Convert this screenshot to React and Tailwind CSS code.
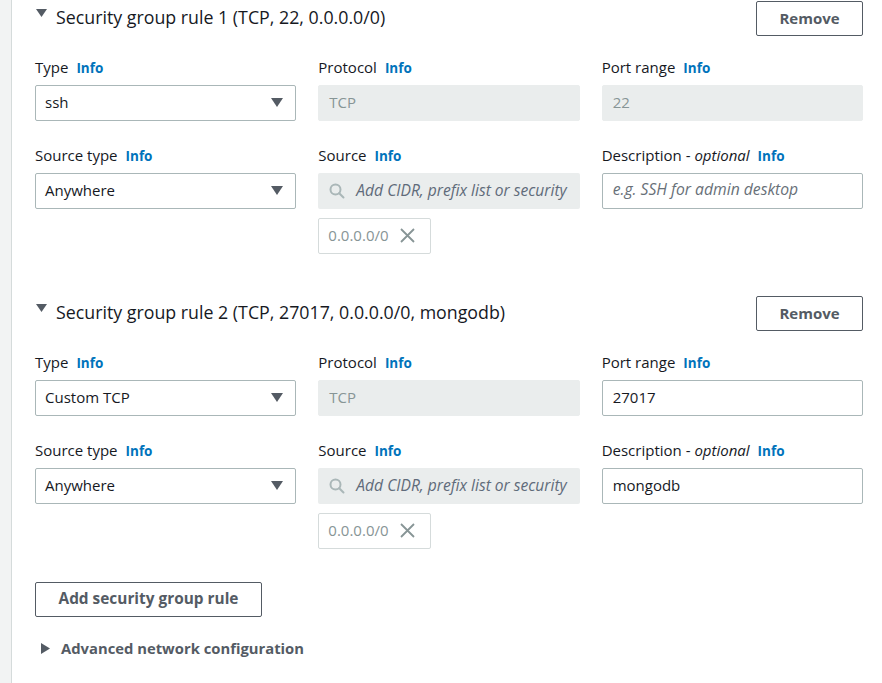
import { useState } from "react";

function Info() {
  return <span className="text-[13.5px] font-bold text-[#0073bb]">Info</span>;
}

function Label({ children }) {
  return (
    <div className="flex h-[20px] items-baseline gap-[8px] text-[15px] leading-[18px] text-[#16191f]">
      {children}
      <Info />
    </div>
  );
}

function Caret() {
  return (
    <svg width="12" height="9" viewBox="0 0 12 9" className="shrink-0">
      <path d="M0 0 H12 L6 9 Z" fill="#545b64" />
    </svg>
  );
}

function Select({ value }) {
  return (
    <div className="mt-[7px] flex h-[36px] items-center justify-between rounded-[2px] border border-[#aab7b8] bg-white pb-[2px] pl-[9px] pr-[12px] text-[15px] text-[#16191f]">
      <span>{value}</span>
      <Caret />
    </div>
  );
}

function Disabled({ value }) {
  return (
    <div className="mt-[7px] flex h-[36px] items-center rounded-[2px] border border-[#eaeded] bg-[#eaeded] px-[10px] pb-[2px] text-[15px] text-[#879596]">
      {value}
    </div>
  );
}

function TextInput({ value, placeholder }) {
  return (
    <div className="mt-[7px] flex h-[36px] items-center rounded-[2px] border border-[#aab7b8] bg-white px-[10px] pb-[2px] text-[15px]">
      {value ? (
        <span className="text-[#16191f]">{value}</span>
      ) : (
        <span className="text-[15.7px] italic text-[#687078]">{placeholder}</span>
      )}
    </div>
  );
}

function SourceField() {
  return (
    <div>
      <div className="mt-[7px] flex h-[36px] items-center gap-[11px] overflow-hidden whitespace-nowrap rounded-[2px] bg-[#eaeded] pb-[1px] pl-[11px] pr-[8px] text-[15.6px]">
        <svg width="16" height="16" viewBox="0 0 16 16" className="shrink-0">
          <circle cx="6.5" cy="6.5" r="5" fill="none" stroke="#aab7b8" strokeWidth="2" />
          <path d="M10.2 10.2 L14.5 14.5" stroke="#aab7b8" strokeWidth="2" strokeLinecap="round" />
        </svg>
        <span className="italic text-[#5f6b7a]">Add CIDR, prefix list or security</span>
      </div>
      <div className="mt-[9px] flex h-[36px] w-[113px] items-center gap-[11px] rounded-[2px] border border-[#d5dbdb] bg-white pb-[1px] pl-[9px] text-[15px] text-[#879596]">
        <span>0.0.0.0/0</span>
        <svg width="15" height="15" viewBox="0 0 15 15">
          <path d="M1 1 L14 14 M14 1 L1 14" stroke="#879596" strokeWidth="1.8" />
        </svg>
      </div>
    </div>
  );
}

function RuleHeader({ title }) {
  return (
    <div className="flex h-[35px] items-center justify-between">
      <div className="flex items-start gap-[9px] pl-[1px]">
        <svg width="11" height="8" viewBox="0 0 11 8" className="mt-[1px] shrink-0">
          <path d="M0 0 H11 L5.5 8 Z" fill="#545b64" />
        </svg>
        <span className="-mt-[3px] text-[17.8px] leading-[24px] text-[#16191f]">{title}</span>
      </div>
      <button className="h-[35px] w-[107px] rounded-[2px] border border-[#545b64] bg-white text-[15px] font-bold text-[#545b64]">
        Remove
      </button>
    </div>
  );
}

function Rule({ rule }) {
  return (
    <div>
      <RuleHeader title={rule.title} />
      <div className="mt-[22px] grid grid-cols-3 gap-x-[22px]">
        <div>
          <Label>Type</Label>
          <Select value={rule.type} />
        </div>
        <div>
          <Label>Protocol</Label>
          <Disabled value="TCP" />
        </div>
        <div>
          <Label>Port range</Label>
          {rule.portEditable ? <TextInput value={rule.port} /> : <Disabled value={rule.port} />}
        </div>
      </div>
      <div className="mt-[25px] grid grid-cols-3 gap-x-[22px]">
        <div>
          <Label>Source type</Label>
          <Select value="Anywhere" />
        </div>
        <div>
          <Label>Source</Label>
          <SourceField />
        </div>
        <div>
          <Label>
            <span>
              Description - <span className="italic">optional</span>
            </span>
          </Label>
          <TextInput value={rule.description} placeholder="e.g. SSH for admin desktop" />
        </div>
      </div>
    </div>
  );
}

export default function App() {
  const [rules] = useState([
    { title: "Security group rule 1 (TCP, 22, 0.0.0.0/0)", type: "ssh", port: "22", portEditable: false, description: "" },
    { title: "Security group rule 2 (TCP, 27017, 0.0.0.0/0, mongodb)", type: "Custom TCP", port: "27017", portEditable: true, description: "mongodb" },
  ]);

  return (
    <div className="flex min-h-screen bg-white font-['Open_Sans',sans-serif]">
      <div className="w-[12px] shrink-0 border-r border-[#d5dbdb] bg-[#f2f3f3]" />
      <div className="flex-1 pl-[23px] pr-[19px] pt-[1px]">
        <div className="flex flex-col gap-[42px]">
          {rules.map((r) => (
            <Rule key={r.title} rule={r} />
          ))}
        </div>

        {/* Add rule */}
        <button className="mt-[33px] h-[35px] w-[227px] rounded-[2px] border border-[#545b64] bg-white pb-[1px] text-[15.4px] font-bold text-[#545b64]">
          Add security group rule
        </button>

        <div className="mt-[21px] flex h-[20px] items-center gap-[11px] pl-[6px]">
          <svg width="9" height="11" viewBox="0 0 9 11">
            <path d="M0 0 V11 L9 5.5 Z" fill="#545b64" />
          </svg>
          <span className="text-[14.8px] font-bold text-[#545b64]">Advanced network configuration</span>
        </div>
      </div>
    </div>
  );
}
